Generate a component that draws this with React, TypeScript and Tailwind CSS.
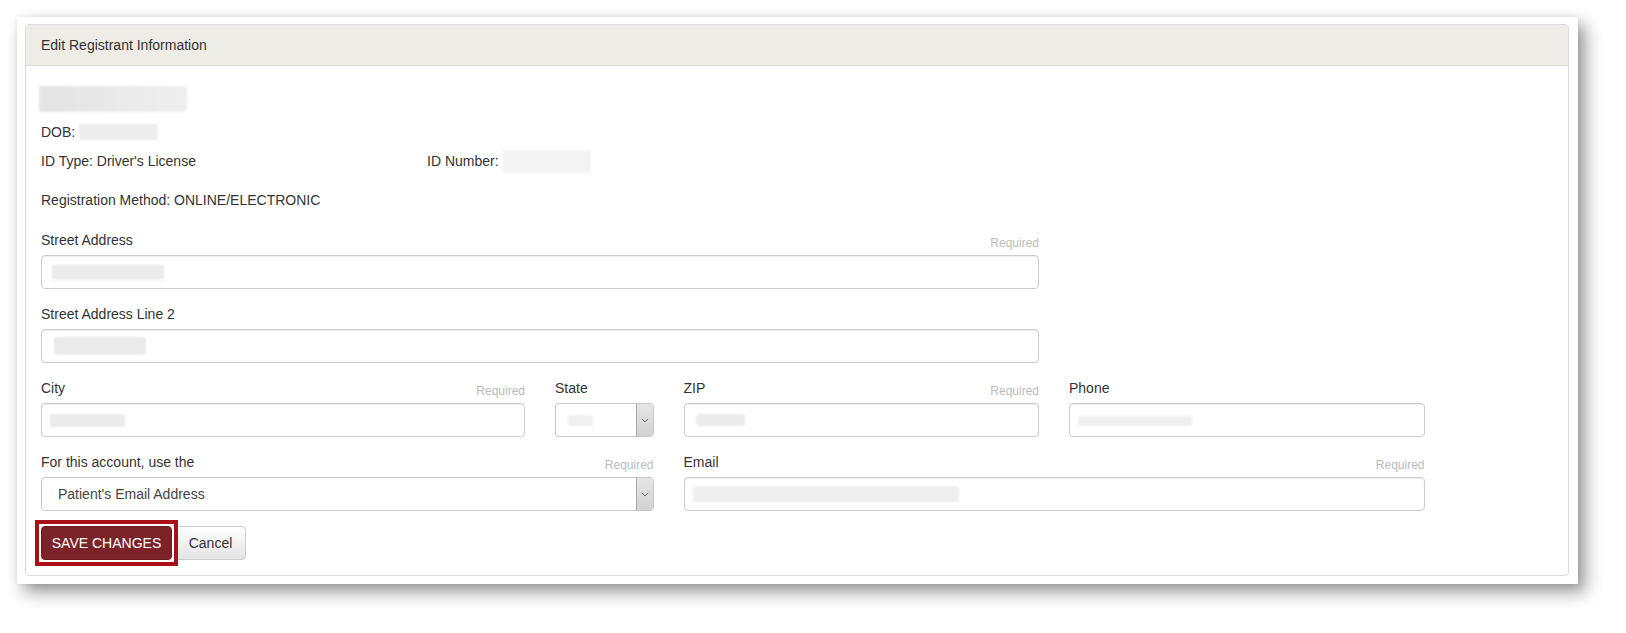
import type { ReactNode } from 'react';

// soft grey smear standing in for redacted personal data
function Redacted({ className }: { className: string }) {
  return <span className={`block shrink-0 rounded-[2px] bg-[#ebebeb] blur-[1px] ${className}`} />;
}

function Chevron() {
  return (
    <svg width="8" height="5" viewBox="0 0 8 5" fill="none">
      <path d="M0.8 0.8 L4 4 L7.2 0.8" stroke="#6b6b6b" strokeWidth="1" />
    </svg>
  );
}

function Field({
  label,
  required,
  className,
  children,
}: {
  label: string;
  required?: boolean;
  className: string;
  children: ReactNode;
}) {
  return (
    <div className={className}>
      <div className="mb-[5px] flex h-5 items-end justify-between">
        <span className="text-[14px] leading-5 text-[#333]">{label}</span>
        {required && <span className="translate-y-[1px] text-[12px] leading-4 text-[#bbbbbb]">Required</span>}
      </div>
      {children}
    </div>
  );
}

function TextBox({ children }: { children?: ReactNode }) {
  return (
    <div className="flex h-[34px] items-center rounded-[4px] border border-[#ccc] bg-white shadow-[inset_0_1px_1px_rgba(0,0,0,0.075)]">
      {children}
    </div>
  );
}

function SelectBox({ children }: { children?: ReactNode }) {
  return (
    <div className="flex h-[34px] items-stretch rounded-[4px] border border-[#c6c6c6] bg-white">
      <div className="flex min-w-0 flex-1 items-center">{children}</div>
      <div className="flex w-[17px] items-center justify-center rounded-r-[3px] border-l border-[#a9a9a9] bg-gradient-to-b from-[#e6e6e6] to-[#d2d2d2]">
        <Chevron />
      </div>
    </div>
  );
}

export default function App() {
  return (
    <div className="min-h-[633px] bg-white pl-[17px] pt-[17px] font-['Liberation_Sans',Arial,sans-serif]">
      {/* screenshot frame */}
      <div className="w-[1561px] bg-white pb-[8px] pl-[8px] pr-[9px] pt-[7px] shadow-[0_0_5px_rgba(0,0,0,0.07),7px_8px_16px_rgba(0,0,0,0.42)]">
        <div className="rounded-[4px] border border-[#dcdcdc] bg-white">
          <div className="flex h-[41px] items-center rounded-t-[3px] border-b border-[#dcdcd6] bg-[#edece6] pl-[15px] text-[14px] text-[#333]">
            Edit Registrant Information
          </div>

          <div className="px-[15px] pb-[15px] pt-[20px] text-[14px] text-[#333]">
            <Redacted className="ml-[-2px] h-[26px] w-[148px] bg-gradient-to-r from-[#e4e4e4] to-[#efefef]" />

            <div className="mt-[10px] flex h-5 items-center">
              <span>DOB:</span>
              <Redacted className="ml-[4px] h-[16px] w-[79px] bg-[#ededed]" />
            </div>

            <div className="mt-[9px] flex h-5 items-center">
              <span className="w-[386px]">ID Type: Driver&apos;s License</span>
              <span>ID Number:</span>
              <Redacted className="ml-[3px] h-[23px] w-[89px] bg-[#f4f4f4]" />
            </div>

            <div className="mt-[19px] h-5 leading-5">Registration Method: ONLINE/ELECTRONIC</div>

            <div className="mt-[20px] grid grid-cols-12 gap-x-[30px] gap-y-[15px]">
              <Field label="Street Address" required className="col-span-8 col-start-1">
                <TextBox>
                  <Redacted className="ml-[10px] h-[15px] w-[112px]" />
                </TextBox>
              </Field>

              <Field label="Street Address Line 2" className="col-span-8 col-start-1">
                <TextBox>
                  <Redacted className="ml-[12px] h-[18px] w-[92px]" />
                </TextBox>
              </Field>

              <Field label="City" required className="col-span-4 col-start-1">
                <TextBox>
                  <Redacted className="ml-[8px] h-[13px] w-[75px]" />
                </TextBox>
              </Field>
              <Field label="State" className="col-span-1">
                <SelectBox>
                  <Redacted className="ml-[12px] h-[11px] w-[25px] bg-[#f0f0f0]" />
                </SelectBox>
              </Field>
              <Field label="ZIP" required className="col-span-3">
                <TextBox>
                  <Redacted className="ml-[11px] h-[12px] w-[49px]" />
                </TextBox>
              </Field>
              <Field label="Phone" className="col-span-3">
                <TextBox>
                  <Redacted className="ml-[8px] mt-[2px] h-[10px] w-[114px] bg-[#efefef]" />
                </TextBox>
              </Field>

              <Field label="For this account, use the" required className="col-span-5 col-start-1">
                <SelectBox>
                  <span className="pl-[16px] text-[14px] text-[#444]">Patient&apos;s Email Address</span>
                </SelectBox>
              </Field>
              <Field label="Email" required className="col-span-6">
                <TextBox>
                  <Redacted className="ml-[8px] h-[16px] w-[266px] bg-[#efefef]" />
                </TextBox>
              </Field>
            </div>

            <div className="mt-[15px] flex items-center gap-[3px]">
              <div className="relative">
                <button className="h-[34px] w-[131px] rounded-[4px] border border-[#6a1a1e] bg-[#7b2328] text-[14px] text-white">
                  SAVE CHANGES
                </button>
                {/* annotation outline */}
                <span className="pointer-events-none absolute -inset-[6px] border-4 border-[#a80f18]" />
              </div>
              <button className="h-[34px] w-[71px] rounded-[4px] border border-[#ccc] bg-gradient-to-b from-white to-[#e3e3e3] text-[14px] text-[#333]">
                Cancel
              </button>
            </div>
          </div>
        </div>
      </div>
    </div>
  );
}
